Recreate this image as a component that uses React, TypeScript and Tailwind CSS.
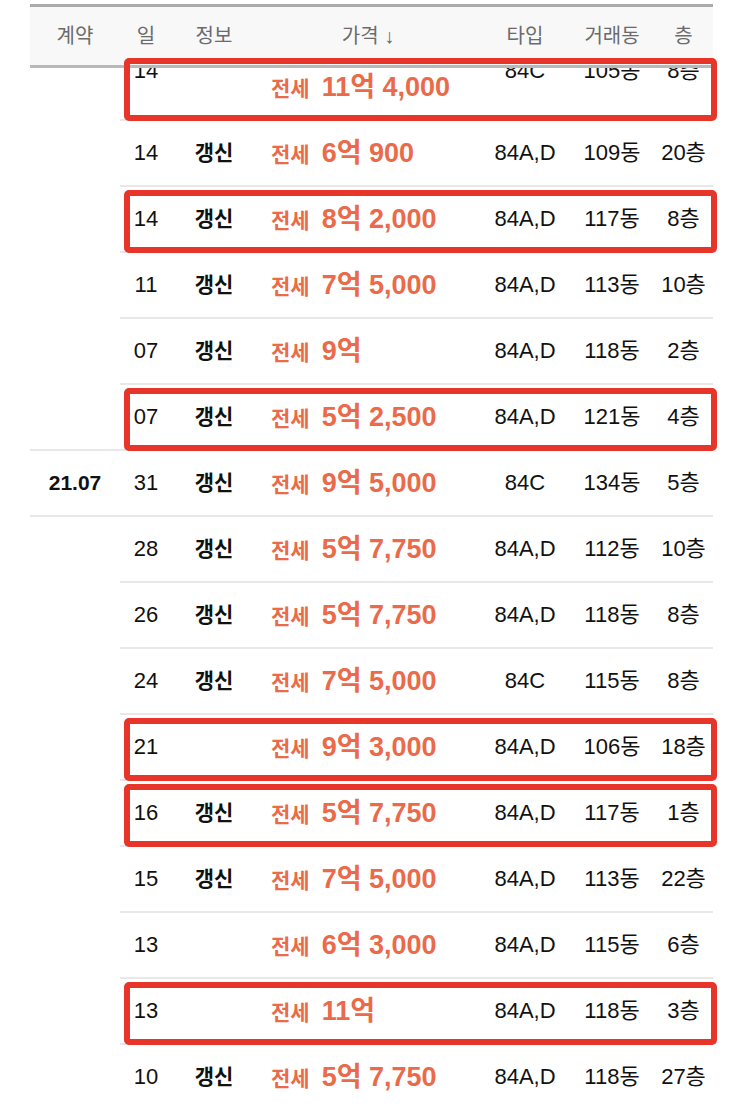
import React from "react";

type Row = {
  g?: string;
  d: string;
  info: boolean;
  price: string;
  type: string;
  dong: string;
  floor: string;
  box?: boolean;
  full?: boolean;
  cut?: boolean;
};

const rows: Row[] = [
  { d: "14", info: false, price: "11억 4,000", type: "84C", dong: "105동", floor: "8층", box: true, cut: true },
  { d: "14", info: true, price: "6억 900", type: "84A,D", dong: "109동", floor: "20층" },
  { d: "14", info: true, price: "8억 2,000", type: "84A,D", dong: "117동", floor: "8층", box: true },
  { d: "11", info: true, price: "7억 5,000", type: "84A,D", dong: "113동", floor: "10층" },
  { d: "07", info: true, price: "9억", type: "84A,D", dong: "118동", floor: "2층" },
  { d: "07", info: true, price: "5억 2,500", type: "84A,D", dong: "121동", floor: "4층", box: true, full: true },
  { g: "21.07", d: "31", info: true, price: "9억 5,000", type: "84C", dong: "134동", floor: "5층", full: true },
  { d: "28", info: true, price: "5억 7,750", type: "84A,D", dong: "112동", floor: "10층" },
  { d: "26", info: true, price: "5억 7,750", type: "84A,D", dong: "118동", floor: "8층" },
  { d: "24", info: true, price: "7억 5,000", type: "84C", dong: "115동", floor: "8층" },
  { d: "21", info: false, price: "9억 3,000", type: "84A,D", dong: "106동", floor: "18층", box: true },
  { d: "16", info: true, price: "5억 7,750", type: "84A,D", dong: "117동", floor: "1층", box: true },
  { d: "15", info: true, price: "7억 5,000", type: "84A,D", dong: "113동", floor: "22층" },
  { d: "13", info: false, price: "6억 3,000", type: "84A,D", dong: "115동", floor: "6층" },
  { d: "13", info: false, price: "11억", type: "84A,D", dong: "118동", floor: "3층", box: true },
  { d: "10", info: true, price: "5억 7,750", type: "84A,D", dong: "118동", floor: "27층" },
];

function TableRow({ r }: { r: Row }) {
  const shift = r.cut ? "mb-[32px]" : "";
  return (
    <div className={`relative flex h-[66px] ${r.cut ? "-mt-[13px]" : ""}`}>
      <div
        className={`flex w-[90px] items-center justify-center ${
          r.full ? "border-b-2 border-[#e8e8e8]" : ""
        }`}
      >
        {r.g && <span className="text-[21px] font-bold text-[#111]">{r.g}</span>}
      </div>
      <div className="grid flex-1 grid-cols-[52px_84px_224px_90px_84px_59px] items-center border-b-2 border-[#e8e8e8] text-[22px] leading-[24px] text-[#111]">
        <div className={`text-center ${shift}`}>{r.d}</div>
        <div className={`text-center text-[21px] font-bold ${shift}`}>{r.info ? "갱신" : ""}</div>
        <div className="flex items-baseline pl-[15px] text-[#ea6a4a]">
          <span className="text-[21px] font-semibold">전세</span>
          <span className="ml-[12px] text-[27px] font-bold leading-[30px]">{r.price}</span>
        </div>
        <div className={`text-center ${shift}`}>{r.type}</div>
        <div className={`text-center ${shift}`}>{r.dong}</div>
        <div className={`text-center ${shift}`}>{r.floor}</div>
      </div>
      {r.box && (
        <div className="pointer-events-none absolute -right-[4px] left-[94px] top-[3px] z-20 h-[63px] rounded-[5px] border-[6px] border-[#e8352a]" />
      )}
    </div>
  );
}

export default function App() {
  return (
    <div className="h-[1108px] w-[743px] overflow-hidden bg-white font-['Liberation_Sans','Noto_Sans_CJK_KR',sans-serif]">
      <div className="px-[30px]">
        <div className="relative z-10 mt-[4px] grid h-[64px] grid-cols-[90px_52px_84px_224px_90px_84px_59px] items-center border-y-[3px] border-t-[#ababab] border-b-[#b9b9b9] bg-[#f8f8f8] text-[20px] text-[#6b6b6b]">
          <div className="text-center">계약</div>
          <div className="text-center">일</div>
          <div className="text-center">정보</div>
          <div className="text-center">가격 ↓</div>
          <div className="text-center">타입</div>
          <div className="text-center">거래동</div>
          <div className="text-center">층</div>
        </div>
        {rows.map((r, i) => (
          <TableRow key={i} r={r} />
        ))}
      </div>
    </div>
  );
}
